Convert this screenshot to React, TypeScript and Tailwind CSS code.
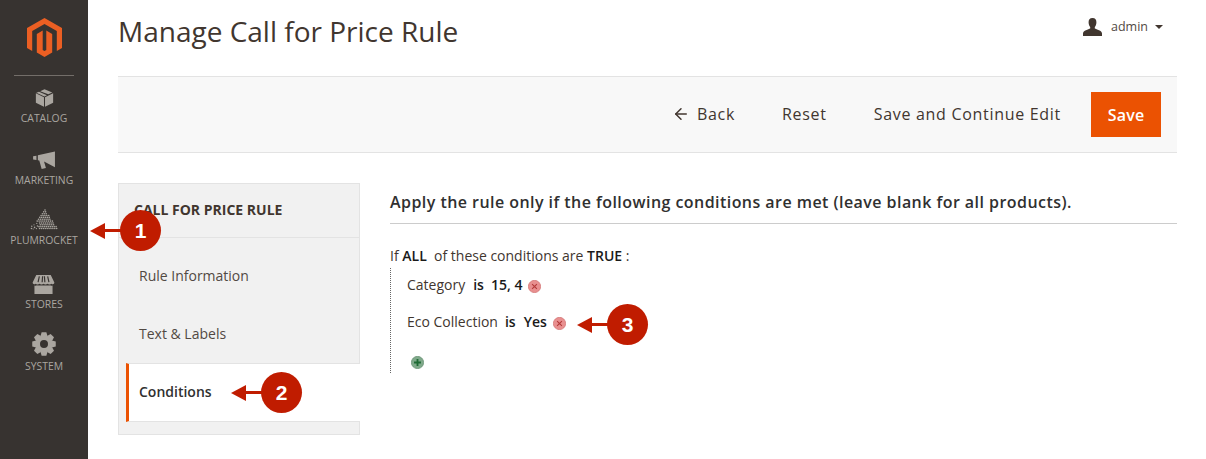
import { ArrowLeft } from 'lucide-react';

const ruleLinks = ['Rule Information', 'Text & Labels'];

function MagentoLogo() {
  return (
    <svg width="35" height="39" viewBox="0 0 35 39" fill="#eb5f23">
      <path d="M17.5 0 L35 10 V30 L29.8 33 V13 L17.5 6 L5.2 13 V33 L0 30 V10 Z" />
      <path d="M15.7 12.6 V32 L17.5 33 L19.3 32 V12.6 L25.2 16 V34.4 L17.5 39 L9.8 34.4 V16 Z" />
    </svg>
  );
}

function CatalogIcon() {
  return (
    <svg width="19" height="20" viewBox="0 0 22 22" fill="#aaa6a0">
      <path d="M1 5.5 L10.4 10 V21 L1 16.5 Z" />
      <path d="M21 5.5 L11.6 10 V21 L21 16.5 Z" />
      <path d="M6 3.2 L11 0.8 L20 4.6 L15.3 6.8 Z" />
      <path d="M4.6 3.9 L1.6 4.9 L10.9 9.2 L13.8 7.7 Z" />
    </svg>
  );
}

function MarketingIcon() {
  return (
    <svg width="23" height="19" viewBox="0 0 24 20" fill="#aaa6a0">
      <path d="M0 5.5 L3.5 5 V9.5 L0 9 Z" />
      <path d="M5 4.6 L23 0.5 V17 L11.5 11 L13.5 18 L9 19 L6.5 10 L5 9.8 Z" />
    </svg>
  );
}

function PyramidIcon() {
  const dots: [number, number, number][] = [];
  for (let row = 0; row < 11; row++) {
    const y = 1 + row * 1.85;
    const half = row * 1.3;
    for (let x = 15 - half; x <= 15 + half + 0.01; x += 1.9) {
      if (row >= 7 && x < 8.5) continue;
      dots.push([x, y, 0.8]);
    }
  }
  const stray: [number, number, number][] = [
    [1.5, 19.5, 0.8], [1.8, 17.2, 0.7], [4, 15.8, 0.6], [4.6, 18.4, 0.8], [6.8, 14.4, 0.6], [7.4, 17, 0.7], [3.2, 20, 0.5], [6.4, 19.6, 0.7],
  ];
  return (
    <svg width="29" height="21" viewBox="0 0 29 21" fill="#aaa6a0">
      {[...dots, ...stray].map(([x, y, r], i) => (
        <circle key={i} cx={x} cy={y} r={r} />
      ))}
    </svg>
  );
}

function StoresIcon() {
  return (
    <svg width="23" height="19" viewBox="0 0 24 21" fill="#aaa6a0">
      <path d="M4 0 H20 L24 8.4 C24 10.4 21.8 10.8 20.8 9.6 C19.8 10.8 17.6 10.8 16.4 9.6 C15.2 10.8 13.2 10.8 12 9.6 C10.8 10.8 8.8 10.8 7.6 9.6 C6.4 10.8 4.2 10.8 3.2 9.6 C2.2 10.8 0 10.4 0 8.4 Z" />
      <path d="M2 11.5 C3 11.9 4.2 11.8 5 11.3 V11.5 H19 V11.3 C19.8 11.8 21 11.9 22 11.5 V21 H2 Z" />
      <path d="M7.4 1.4 L6 8 M11 1.4 L10.5 8 M13 1.4 L13.5 8 M16.6 1.4 L18 8" stroke="#373330" strokeWidth="1.3" />
    </svg>
  );
}

// 8 tooth gear
function gearPath() {
  const pts: string[] = [];
  for (let i = 0; i < 8; i++) {
    const a = (i * Math.PI) / 4;
    const corners: [number, number][] = [
      [8.6, a - 0.42],
      [12, a - 0.2],
      [12, a + 0.2],
      [8.6, a + 0.42],
    ];
    corners.forEach(([r, t]) => {
      pts.push(`${(12 + r * Math.sin(t)).toFixed(2)} ${(12 - r * Math.cos(t)).toFixed(2)}`);
    });
  }
  return `M${pts.join(' L')} Z M12 8 A4 4 0 1 0 12 16 A4 4 0 1 0 12 8 Z`;
}

function SystemIcon() {
  return (
    <svg width="24" height="24" viewBox="0 0 24 24" fill="#aaa6a0">
      <path fillRule="evenodd" d={gearPath()} />
    </svg>
  );
}

function UserIcon() {
  return (
    <svg width="19" height="18" viewBox="0 0 19 18" fill="#41362f">
      <path d="M9.5 0 C12.3 0 13.6 2 13.4 4.8 C13.3 6.6 12.6 8.2 11.8 9 V10.6 C13.4 11.6 19 12.4 19 15.6 V18 H0 V15.6 C0 12.4 5.6 11.6 7.2 10.6 V9 C6.4 8.2 5.7 6.6 5.6 4.8 C5.4 2 6.7 0 9.5 0 Z" />
    </svg>
  );
}

function RemoveIcon() {
  return (
    <svg width="13" height="13" viewBox="0 0 12 12" className="mt-[4px] shrink-0">
      <circle cx="6" cy="6" r="5.7" fill="#e88f8f" stroke="#cf6a6a" strokeWidth="0.6" />
      <path d="M3.8 3.8 L8.2 8.2 M8.2 3.8 L3.8 8.2" stroke="#b33a3a" strokeWidth="1" />
    </svg>
  );
}

function AddIcon() {
  return (
    <svg width="13" height="13" viewBox="0 0 12 12">
      <circle cx="6" cy="6" r="5.7" fill="#7fa98a" stroke="#5e8a6b" strokeWidth="0.6" />
      <path d="M6 2.8 V9.2 M2.8 6 H9.2" stroke="#1f6b35" strokeWidth="1.7" />
    </svg>
  );
}

function NavItem({ label, icon, className }: { label: string; icon: React.ReactNode; className: string }) {
  return (
    <div className={`flex flex-col items-center ${className}`}>
      <div className="flex h-[24px] items-end justify-center">{icon}</div>
      <span className="mt-[3px] text-[10.4px] leading-[14px] text-[#aaa6a0]">{label}</span>
    </div>
  );
}

function Callout({ n, className }: { n: number; className: string }) {
  return (
    <div className={`absolute flex items-center ${className}`}>
      <span className="h-0 w-0 border-y-[8px] border-r-[15px] border-y-transparent border-r-[#c01c00]" />
      <span className="h-[3px] w-[16px] bg-[#c01c00]" />
      <span className="-ml-px flex h-[41px] w-[41px] items-center justify-center rounded-full bg-[#c01c00] font-['Liberation_Sans',sans-serif] text-[21px] font-bold text-white">
        {n}
      </span>
    </div>
  );
}

export default function App() {
  return (
    <div className="relative flex h-[459px] w-[1206px] overflow-hidden bg-white font-['Open_Sans',sans-serif] text-[#41362f]">
      <aside className="flex w-[88px] shrink-0 flex-col items-center bg-[#373330]">
        <div className="flex h-[76px] w-[60px] justify-center border-b border-[#736e69] pt-[18px]">
          <MagentoLogo />
        </div>
        <NavItem label="CATALOG" icon={<CatalogIcon />} className="mt-[8px]" />
        <NavItem label="MARKETING" icon={<MarketingIcon />} className="mt-[21px]" />
        <NavItem label="PLUMROCKET" icon={<PyramidIcon />} className="mt-[19px]" />
        <NavItem label="STORES" icon={<StoresIcon />} className="mt-[23px]" />
        <NavItem label="SYSTEM" icon={<SystemIcon />} className="mt-[21px]" />
      </aside>

      <main className="min-w-0 flex-1 pl-[30px] pr-[29px]">
        <header className="flex h-[76px] items-start justify-between">
          <h1 className="mt-[11px] text-[28px] leading-[40px] font-normal">Manage Call for Price Rule</h1>
          <div className="mt-[18px] mr-[14px] flex items-center gap-[9px] text-[12.5px] leading-[18px]">
            <UserIcon />
            <span className="text-[#514943]">admin</span>
            <span className="-ml-[2px] h-0 w-0 border-x-[4px] border-t-[4.5px] border-x-transparent border-t-[#41362f]" />
          </div>
        </header>

        <div className="flex h-[77px] items-center justify-end border-y border-[#e3e3e3] bg-[#f8f8f8] pr-[16px] text-[16px] leading-[22px] tracking-[0.7px]">
          <div className="-mt-px flex items-center text-[#41362f]">
            <ArrowLeft size={18} strokeWidth={2} className="mr-[7px]" />
            Back
          </div>
          <span className="-mt-px ml-[47px] text-[#41362f]">Reset</span>
          <span className="-mt-px ml-[47px] text-[#41362f]">Save and Continue Edit</span>
          <button type="button" className="ml-[30px] h-[45px] w-[70px] bg-[#eb5202] text-[16px] font-semibold tracking-[0.2px] text-white">
            Save
          </button>
        </div>

        <div className="mt-[30px] flex">
          <nav className="h-[252px] w-[242px] shrink-0 border border-[#e3e3e3] bg-[#f1f1f1]">
            <div className="flex h-[54px] items-center border-b border-[#e3e3e3] pb-[2px] pl-[15px] text-[14px] font-bold">
              CALL FOR PRICE RULE
            </div>
            <div className="pt-[9px]">
              {ruleLinks.map((link) => (
                <div key={link} className="flex h-[58px] items-center pb-[2px] pl-[20px] text-[14px] text-[#514943]">
                  {link}
                </div>
              ))}
            </div>
            <div className="-mr-px ml-[7px] flex h-[59px] items-center border-y border-[#e3e3e3] border-l-[3px] border-l-[#eb5202] bg-white pb-[2px] pl-[10px] text-[14px] font-semibold text-[#303030]">
              Conditions
            </div>
          </nav>

          <section className="ml-[30px] min-w-0 flex-1">
            <h2 className="flex h-[41px] items-center border-b border-[#cccccc] pb-[3px] text-[16px] font-semibold tracking-[0.45px] text-[#303030]">
              Apply the rule only if the following conditions are met (leave blank for all products).
            </h2>
            <p className="mt-[22px] text-[14px] leading-[19px] whitespace-pre">
              If <b className="font-semibold text-[#1a1a1a]">ALL</b>{'  '}of these conditions are <b className="font-semibold text-[#1a1a1a]">TRUE</b> :
            </p>
            <div className="mt-[3px] flex h-[105px] flex-col border-l border-dotted border-[#666666] pl-[16px] text-[14px] leading-[19px]">
              <div className="mt-[7px] flex items-center whitespace-pre">
                <span>Category</span>
                <b className="ml-[8px] font-semibold text-[#1a1a1a]">is</b>
                <b className="ml-[7px] font-semibold text-[#1a1a1a]">15, 4</b>
                <span className="ml-[6px]"><RemoveIcon /></span>
              </div>
              <div className="mt-[18px] flex items-center whitespace-pre">
                <span>Eco Collection</span>
                <b className="ml-[7px] font-semibold text-[#1a1a1a]">is</b>
                <b className="ml-[8px] font-semibold text-[#1a1a1a]">Yes</b>
                <span className="ml-[6px]"><RemoveIcon /></span>
              </div>
              <div className="mt-[24px] pl-[4px] pt-px">
                <AddIcon />
              </div>
            </div>
          </section>
        </div>
      </main>

      <Callout n={1} className="left-[90px] top-[210px]" />
      <Callout n={2} className="left-[231px] top-[372px]" />
      <Callout n={3} className="left-[577px] top-[304px]" />
    </div>
  );
}
